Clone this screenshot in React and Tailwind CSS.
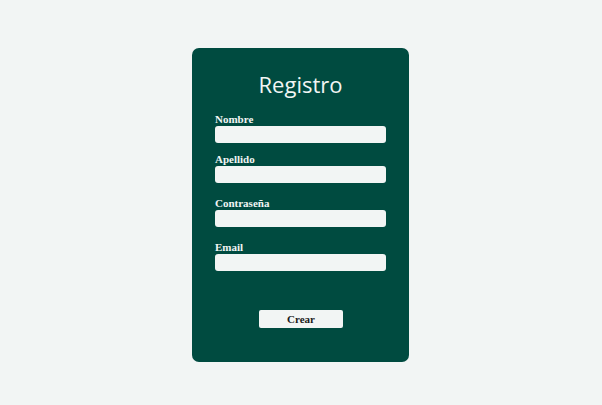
export default function App() {
  const label = "block text-[11px] leading-[14px] font-bold text-[#f2f5f4] [font-family:'Liberation_Serif',serif]";
  const input = "block w-[171px] h-[17px] rounded-[3px] bg-[#f2f5f4] border-0 outline-none";
  return (
    <div className="min-h-[405px] w-full bg-[#f2f5f4] flex justify-center pt-[48px] pr-[1px]">
      <div className="w-[217px] h-[314px] rounded-[7px] bg-[#004b40] flex flex-col pt-[20px] pl-[23px]">
        <h1 className="text-[22px] leading-[32px] font-normal text-[#f2f5f4] text-center pr-[23px] [font-family:'Open_Sans',sans-serif]">
          Registro
        </h1>
        <div className="mt-[12px]">
          <label className={label}>Nombre</label>
          <div className={input}></div>
        </div>
        <div className="mt-[9px]">
          <label className={label}>Apellido</label>
          <div className={input}></div>
        </div>
        <div className="mt-[13px]">
          <label className={label}>Contraseña</label>
          <div className={input}></div>
        </div>
        <div className="mt-[13px]">
          <label className={label}>Email</label>
          <div className={input}></div>
        </div>
        <div className="mt-[39px] pl-[44px] flex">
          <button className="block w-[84px] h-[18px] rounded-[2px] bg-[#f2f5f4] text-[11px] leading-[18px] font-bold text-[#1a1a1a] [font-family:'Liberation_Serif',serif]">
            Crear
          </button>
        </div>
      </div>
    </div>
  );
}
